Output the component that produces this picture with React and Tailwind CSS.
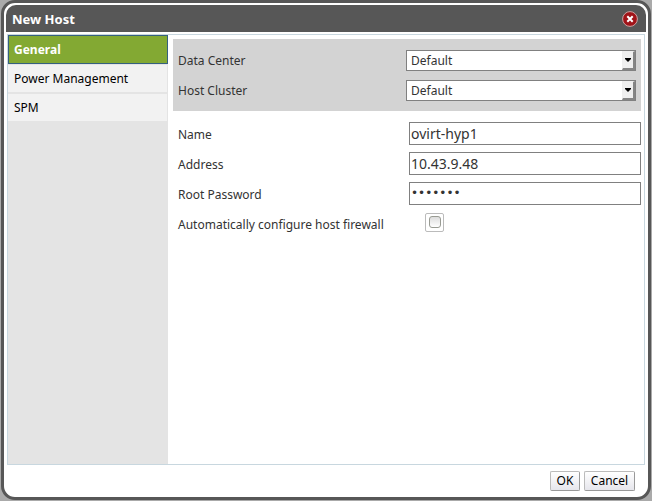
import React, { useState } from "react";

const tabs = ["General", "Power Management", "SPM"];

function SelectRow({ id, label }) {
  return (
    <div className="flex h-[30px] items-center">
      <label htmlFor={id} className="flex-1 pt-[2px]">{label}</label>
      <div className="relative w-[230px]">
        <select
          id={id}
          className="block h-[21px] w-full appearance-none rounded-none border border-[#808080] bg-white pt-px pr-4 pl-1 text-[12px] leading-[18px] text-[#333] outline-none"
        >
          <option>Default</option>
        </select>
        <span className="pointer-events-none absolute top-px right-px bottom-px flex w-[13px] justify-center border-t border-r-2 border-b-2 border-l border-t-[#eee] border-r-[#858585] border-b-[#858585] border-l-[#eee] bg-[#efefef] pt-[6px]">
          <svg width="6" height="4" viewBox="0 0 6 4" aria-hidden="true">
            <path d="M0 0h6v1L3 4 0 1z" fill="#000" />
          </svg>
        </span>
      </div>
    </div>
  );
}

function TextRow({ id, label, value }) {
  return (
    <div className="flex h-[30px] items-center">
      <label htmlFor={id} className="flex-1 pt-1">{label}</label>
      <input
        id={id}
        type="text"
        defaultValue={value}
        className="h-[23px] w-[232px] rounded-none border border-[#808080] bg-white px-px text-[14px] leading-[20px] text-[#333] outline-none"
      />
    </div>
  );
}

export default function App() {
  const [active, setActive] = useState("General");
  return (
    <div className="flex min-h-screen bg-[#aaa] px-px pb-px font-['Noto_Sans',sans-serif] text-[12px] text-[#333]">
      <section
        aria-label="New Host"
        className="flex flex-1 flex-col rounded-[14px] border-3 border-[#575757] bg-white px-[2px] pt-[2px]"
      >
        <header className="flex h-[27px] shrink-0 items-center justify-between rounded-t-[10px] bg-[#575757] pr-2 pl-[6px]">
          <h1 className="pt-[2px] text-[13px] font-bold text-white">New Host</h1>
          <button type="button" aria-label="Close" className="block">
            <svg width="16" height="16" viewBox="0 0 16 16" aria-hidden="true">
              <circle cx="8" cy="8" r="7.4" fill="#a01318" stroke="#c9a3a3" strokeWidth="1" />
              <path d="M5.3 5.3l5.4 5.4M10.7 5.3l-5.4 5.4" stroke="#fff" strokeWidth="2" />
            </svg>
          </button>
        </header>

        <div className="mx-px mt-[2px] flex flex-1 border border-[#c8d7df]">
          <nav className="flex w-[160px] shrink-0 flex-col bg-[#e4e4e4]">
            {tabs.map((tab) => (
              <button
                key={tab}
                type="button"
                onClick={() => setActive(tab)}
                className={
                  tab === active
                    ? "h-[29px] border border-[#35607f] bg-[#83a933] pl-[5px] text-left font-bold text-white"
                    : "mr-px mb-[2px] h-[27px] bg-[#f2f2f2] pl-[6px] text-left text-black nth-2:mt-px"
                }
              >
                {tab}
              </button>
            ))}
          </nav>

          <form className="flex flex-1 flex-col pt-1 pr-[3px] pl-[5px]">
            <div className="bg-[#d3d3d3] px-[5px] py-[6px]">
              <SelectRow id="data-center" label="Data Center" />
              <SelectRow id="host-cluster" label="Host Cluster" />
            </div>
            <div className="pt-[7px] pl-[5px]">
              <TextRow id="name" label="Name" value="ovirt-hyp1" />
              <TextRow id="address" label="Address" value="10.43.9.48" />
              <div className="flex h-[30px] items-center">
                <label htmlFor="password" className="flex-1 pt-1">Root Password</label>
                <input
                  id="password"
                  type="password"
                  defaultValue="example"
                  className="h-[23px] w-[232px] rounded-none border border-[#808080] bg-white px-px font-['DejaVu_Sans',sans-serif] text-[12px] leading-[20px] text-[#333] outline-none"
                />
              </div>
              <div className="flex h-[30px] items-center">
                <label htmlFor="firewall" className="flex-1 pt-1">
                  Automatically configure host firewall
                </label>
                <div className="w-[216px] pb-[2px]">
                  <span className="flex size-[19px] items-center justify-center rounded-xs border border-[#bbb] bg-white">
                    <input
                      id="firewall"
                      type="checkbox"
                      className="size-3 appearance-none rounded-[3px] border border-[#999b93] bg-linear-to-b from-[#ddd] to-white checked:bg-[#83a933]"
                    />
                  </span>
                </div>
              </div>
            </div>
          </form>
        </div>

        <footer className="flex h-8 shrink-0 items-center justify-end gap-1 pr-[11px]">
          <button type="button" className="h-5 w-[30px] rounded-xs border border-[#bbb] border-r-[#999] border-b-[#999] bg-linear-to-b from-white to-[#e6e6ec] leading-[18px] text-black">
            OK
          </button>
          <button type="button" className="h-5 w-[51px] rounded-xs border border-[#bbb] border-r-[#999] border-b-[#999] bg-linear-to-b from-white to-[#e6e6ec] leading-[18px] text-black">
            Cancel
          </button>
        </footer>
      </section>
    </div>
  );
}
